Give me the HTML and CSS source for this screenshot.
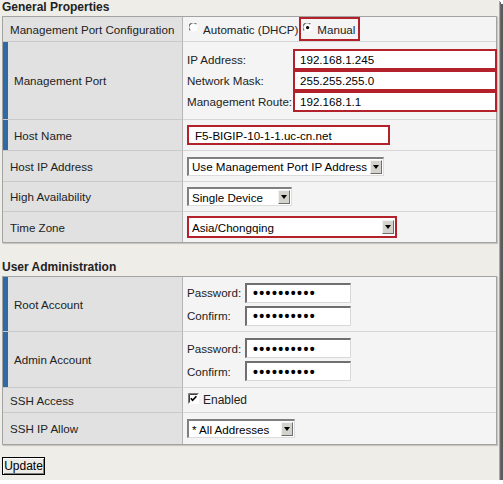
FILE: index.html
```html
<!DOCTYPE html>
<html>
<head>
<meta charset="utf-8">
<link rel="stylesheet" href="styles.css">
</head>
<body>
<div class="page">
  <div class="section-title">General Properties</div>
  <table class="props">
    <tr class="h25">
      <th>Management Port Configuration</th>
      <td>
        <div class="radios">
          <span class="radio-opt">
            <svg class="radio" width="9" height="9" viewBox="0 0 9 9"><circle cx="4.5" cy="4.5" r="4" fill="#fff"/><path d="M1.2 7.3 A4 4 0 0 1 7.3 1.2" fill="none" stroke="#6b6b6b" stroke-width="1.2"/></svg>
            Automatic (DHCP)
          </span>
          <span class="radio-opt hl">
            <svg class="radio" width="9" height="9" viewBox="0 0 9 9"><circle cx="4.5" cy="4.5" r="4" fill="#fff"/><path d="M1.2 7.3 A4 4 0 0 1 7.3 1.2" fill="none" stroke="#6b6b6b" stroke-width="1.2"/><circle cx="4.6" cy="4.6" r="1.6" fill="#000"/></svg>
            Manual
          </span>
        </div>
      </td>
    </tr>
    <tr class="h78">
      <th class="req">Management Port</th>
      <td>
        <div class="port-grid">
          <span class="sub-label">IP Address:</span><span class="field red">192.168.1.245</span>
          <span class="sub-label">Network Mask:</span><span class="field red">255.255.255.0</span>
          <span class="sub-label">Management Route:</span><span class="field red">192.168.1.1</span>
        </div>
      </td>
    </tr>
    <tr class="h31">
      <th class="req">Host Name</th>
      <td><span class="field red host">F5-BIGIP-10-1-1.uc-cn.net</span></td>
    </tr>
    <tr class="h31">
      <th>Host IP Address</th>
      <td><span class="select w197"><span class="sel-text">Use Management Port IP Address</span><span class="arrow"></span></span></td>
    </tr>
    <tr class="h30">
      <th>High Availability</th>
      <td><span class="select w105"><span class="sel-text">Single Device</span><span class="arrow"></span></span></td>
    </tr>
    <tr class="h30 last">
      <th>Time Zone</th>
      <td><span class="select red-sel w210"><span class="sel-text">Asia/Chongqing</span><span class="arrow"></span></span></td>
    </tr>
  </table>

  <div class="section-title second">User Administration</div>
  <table class="props">
    <tr class="h55">
      <th class="req">Root Account</th>
      <td>
        <div class="pw-grid">
          <span class="sub-label">Password:</span><span class="pw"><span class="dots">••••••••••</span></span>
          <span class="sub-label">Confirm:</span><span class="pw"><span class="dots">••••••••••</span></span>
        </div>
      </td>
    </tr>
    <tr class="h56">
      <th class="req">Admin Account</th>
      <td>
        <div class="pw-grid">
          <span class="sub-label">Password:</span><span class="pw"><span class="dots">••••••••••</span></span>
          <span class="sub-label">Confirm:</span><span class="pw"><span class="dots">••••••••••</span></span>
        </div>
      </td>
    </tr>
    <tr class="h25">
      <th>SSH Access</th>
      <td>
        <span class="check-opt">
          <svg class="check" width="11" height="11" viewBox="0 0 11 11"><rect x="0" y="0" width="11" height="11" fill="#fff"/><path d="M0.5 10.5 V0.5 H10.5" fill="none" stroke="#7a7a7a" stroke-width="1"/><path d="M1.5 9.5 V1.5 H9.5" fill="none" stroke="#404040" stroke-width="1"/><path d="M2.8 5.2 L4.6 7.2 L8.4 3.2" fill="none" stroke="#000" stroke-width="1.6"/></svg>
          Enabled
        </span>
      </td>
    </tr>
    <tr class="h31 last">
      <th>SSH IP Allow</th>
      <td><span class="select w108"><span class="sel-text">* All Addresses</span><span class="arrow"></span></span></td>
    </tr>
  </table>

  <div class="actions"><button class="btn" type="button">Update</button></div>
</div>
</body>
</html>
```

FILE: styles.css
```css
html, body {
  margin: 0;
  padding: 0;
  background: #ffffff;
}
body {
  font-family: "Liberation Sans", Arial, sans-serif;
  font-size: 11.6px;
  color: #222;
}
.page {
  width: 499px;
  height: 480px;
  background: #efede8;
  box-shadow: 1px 1px 0 #a6a6a6, 2px 2px 0 #6a6a6a, 4px 4px 0 #5a5a5a;
  overflow: hidden;
}
.section-title {
  font-weight: bold;
  font-size: 12px;
  line-height: 15px;
  padding-left: 2px;
  margin-bottom: 1px;
  color: #222;
}
.section-title.second {
  padding-top: 15px;
  line-height: 18px;
  margin-bottom: 0;
}
.props {
  margin-left: 2px;
  width: 495px;
  table-layout: fixed;
  border-collapse: separate;
  border-spacing: 0;
  border: 1px solid #a3a3a3;
  box-shadow: 1px 1px 1px #c8c6c0;
}
.props th {
  width: 172px;
  text-align: left;
  font-weight: normal;
  background: #e1e1e1;
  padding: 0 0 0 7px;
  border-right: 1px solid #b5b5b5;
  border-bottom: 1px solid #c9c9c9;
  white-space: nowrap;
  vertical-align: middle;
  color: #222;
}
.props th.req {
  box-shadow: inset 5px 0 0 #2f6aa4;
  text-indent: 4px;
}
.props td {
  background: #f4f4f4;
  padding: 0 0 0 4px;
  border-bottom: 1px solid #d6d6d6;
  vertical-align: middle;
  white-space: nowrap;
  overflow: visible;
}
.props tr.last th,
.props tr.last td {
  border-bottom: none;
}
.h25 { height: 25px; }
.h30 { height: 30px; }
.h31 { height: 31px; }
.h55 { height: 55px; }
.h56 { height: 56px; }
.h78 { height: 78px; }

.radios {
  display: flex;
  align-items: stretch;
  height: 24px;
}
.radio-opt {
  display: flex;
  align-items: center;
  gap: 5px;
  padding-left: 2px;
}
.radio-opt.hl {
  border: 2px solid #b3222a;
  padding: 0 3px 0 2px;
  margin-left: 1px;
}
.radio {
  display: block;
  margin-top: -3px;
}

.port-grid {
  display: grid;
  grid-template-columns: 106px 204px;
  align-items: center;
}
.field {
  display: flex;
  align-items: center;
  box-sizing: border-box;
  height: 21px;
  background: #fff;
  padding-left: 5px;
  color: #000;
}
.field.red {
  border: 2px solid #b3222a;
}
.field.host {
  width: 203px;
  height: 20px;
  padding-left: 6px;
}

.select {
  display: flex;
  align-items: center;
  box-sizing: border-box;
  height: 19px;
  background: #fff;
  border-top: 2px solid #7f7f7f;
  border-left: 2px solid #7f7f7f;
  border-right: 1px solid #dcdcdc;
  border-bottom: 1px solid #dcdcdc;
  padding: 0 1px 0 3px;
  color: #000;
}
.select .sel-text {
  flex: 1;
  overflow: hidden;
}
.select.red-sel {
  border: 2px solid #b3222a;
  height: 22px;
  padding-right: 1px;
}
.w197 { width: 197px; }
.w105 { width: 105px; }
.w210 { width: 210px; }
.w108 { width: 108px; }
.arrow {
  position: relative;
  box-sizing: border-box;
  flex: none;
  width: 12px;
  height: 14px;
  background: #d4d2cc;
  border-top: 1px solid #f2f2f2;
  border-left: 1px solid #f2f2f2;
  border-right: 1px solid #6e6e6e;
  border-bottom: 1px solid #6e6e6e;
}
.arrow::after {
  content: "";
  position: absolute;
  left: 2px;
  top: 4px;
  border-left: 3px solid transparent;
  border-right: 3px solid transparent;
  border-top: 4px solid #000;
}

.pw-grid {
  display: grid;
  grid-template-columns: 58px 106px;
  row-gap: 3px;
  align-items: center;
}
.pw {
  display: flex;
  align-items: center;
  box-sizing: border-box;
  height: 20px;
  background: #fff;
  border-top: 2px solid #6f6f6f;
  border-left: 2px solid #6f6f6f;
  border-right: 1px solid #d8d8d8;
  border-bottom: 1px solid #d8d8d8;
  padding-left: 6px;
}
.dots {
  font-size: 14px;
  font-weight: bold;
  letter-spacing: 1.4px;
  color: #000;
  line-height: 14px;
}

.check-opt {
  display: flex;
  align-items: center;
  gap: 4px;
  padding-left: 1px;
  font-size: 12px;
}
.check {
  display: block;
  margin-top: -4px;
}

.actions {
  padding: 12px 0 0 2px;
}
.btn {
  font-family: "Liberation Sans", Arial, sans-serif;
  font-size: 12px;
  color: #000;
  background: #ecebe6;
  height: 18px;
  width: 43px;
  padding: 0;
  margin: 0;
  border: 1px solid #000;
  box-shadow: inset 1px 1px 0 #fff, inset -1px -1px 0 #808080;
  border-radius: 0;
}
```
